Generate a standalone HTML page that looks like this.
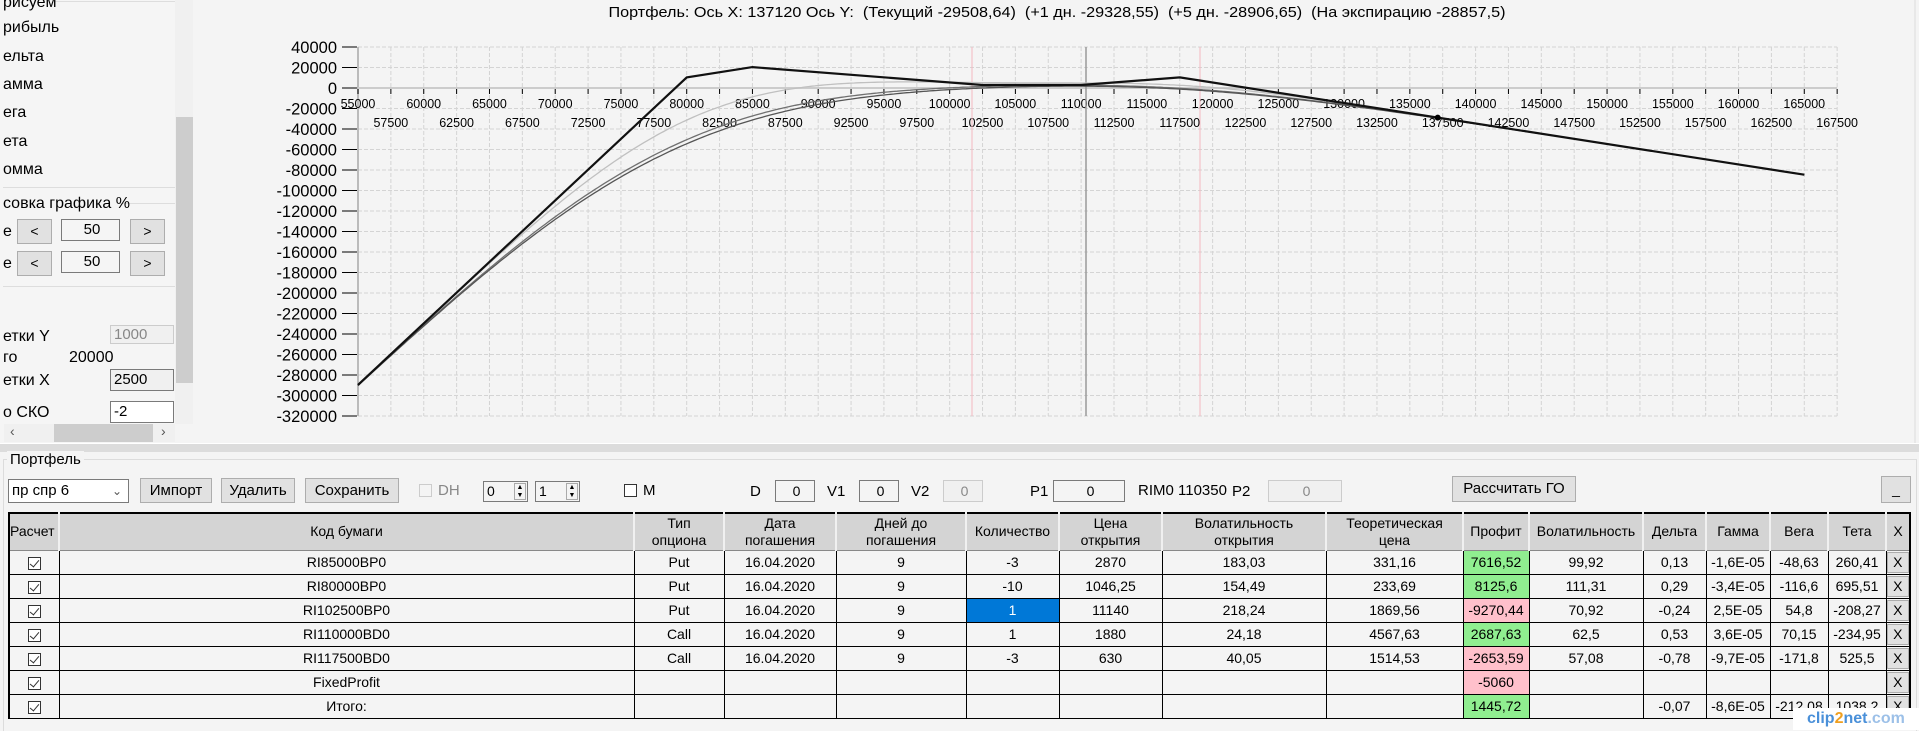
<!DOCTYPE html>
<html><head><meta charset="utf-8">
<style>
*{box-sizing:border-box;margin:0;padding:0}
body{width:1919px;height:730px;overflow:hidden;background:#f4f4f4;font-family:"Liberation Sans",Arial,sans-serif;font-size:14px;color:#000;position:relative}
.a{position:absolute;white-space:nowrap}
.l{font-size:16px}
.btn{position:absolute;background:#e1e1e1;border:1px solid #adadad;text-align:center;font-size:14px}
.inp{position:absolute;background:#fff;border:1px solid #7a7a7a;font-size:14px;padding-left:3px}
.dis{background:#f0f0f0;border-color:#ccc;color:#888}
table{position:absolute;left:8px;top:512px;border-collapse:collapse;table-layout:fixed;border:2px solid #000;border-bottom:none}
td{border:1px solid #000;height:24px;text-align:center;font-size:14px;overflow:hidden;white-space:nowrap;background:#f4f4f4}
th{background:#d4d4d4;font-weight:normal;height:37px;font-size:14px;line-height:17px;border-left:2px solid #f0f0f0;border-right:1px solid #a0a0a0;border-bottom:1px solid #888}
.g{background:#90ee90}.p{background:#ffc0cb}
.cb{display:inline-block;width:13px;height:13px;border:1px solid #333;background:#fff;position:relative;vertical-align:middle}
.cb:after{content:"";position:absolute;left:3px;top:0px;width:4px;height:8px;border:solid #333;border-width:0 1px 1px 0;transform:rotate(40deg)}
.xb{display:block;margin:0 auto;width:22px;height:21px;background:#e1e1e1;border:1px solid #adadad;line-height:19px}
</style></head><body>

<!-- left panel -->
<div class="a" style="left:0;top:0;width:175px;height:443px;background:#f5f5f5"></div>
<div class="a" style="left:55px;top:1px;width:120px;border-top:1px solid #ddd"></div>
<div class="a l" style="left:3px;top:-6px">рисуем</div>
<div class="a l" style="left:3px;top:19px">рибыль</div>
<div class="a l" style="left:3px;top:48px">ельта</div>
<div class="a l" style="left:3px;top:76px">амма</div>
<div class="a l" style="left:3px;top:104px">ега</div>
<div class="a l" style="left:3px;top:133px">ета</div>
<div class="a l" style="left:3px;top:161px">омма</div>
<div class="a" style="left:3px;top:187px;width:172px;border-top:1px solid #ddd"></div>
<div class="a" style="left:118px;top:203px;width:57px;border-top:1px solid #ddd"></div>
<div class="a l" style="left:3px;top:195px">совка графика %</div>
<div class="a l" style="left:3px;top:223px">е</div>
<div class="btn" style="left:17px;top:219px;width:35px;height:25px;line-height:23px">&lt;</div>
<div class="inp" style="left:61px;top:219px;width:59px;height:22px;text-align:center;background:#f5f5f5;line-height:20px;font-size:15px">50</div>
<div class="btn" style="left:130px;top:219px;width:35px;height:25px;line-height:23px">&gt;</div>
<div class="a l" style="left:3px;top:255px">е</div>
<div class="btn" style="left:17px;top:251px;width:35px;height:25px;line-height:23px">&lt;</div>
<div class="inp" style="left:61px;top:251px;width:59px;height:22px;text-align:center;background:#f5f5f5;line-height:20px;font-size:15px">50</div>
<div class="btn" style="left:130px;top:251px;width:35px;height:25px;line-height:23px">&gt;</div>
<div class="a" style="left:3px;top:286px;width:172px;border-top:1px solid #ddd"></div>
<div class="a l" style="left:3px;top:328px">етки Y</div>
<div class="inp dis" style="left:110px;top:325px;width:64px;height:19px;line-height:17px;font-size:15px">1000</div>
<div class="a l" style="left:3px;top:349px">го</div>
<div class="a l" style="left:69px;top:349px">20000</div>
<div class="a l" style="left:3px;top:372px">етки X</div>
<div class="inp" style="left:110px;top:369px;width:64px;height:22px;line-height:20px;background:#f0f0f0;font-size:15px">2500</div>
<div class="a l" style="left:3px;top:404px">о СКО</div>
<div class="inp" style="left:110px;top:401px;width:64px;height:22px;line-height:20px;font-size:15px">-2</div>
<div class="a" style="left:176px;top:403px;font-size:12px;color:#555">⌄</div>
<div class="a" style="left:175px;top:0;width:18px;height:424px;background:#f0f0f0"></div>
<div class="a" style="left:176px;top:117px;width:17px;height:266px;background:#cdcdcd"></div>
<div class="a" style="left:4px;top:424px;width:171px;height:18px;background:#f0f0f0"></div>
<div class="a" style="left:54px;top:424px;width:99px;height:18px;background:#cdcdcd"></div>
<div class="a" style="left:10px;top:423px;color:#555;font-size:14px">&lsaquo;</div>
<div class="a" style="left:161px;top:423px;color:#555;font-size:14px">&rsaquo;</div>

<!-- chart -->
<svg class="a" style="left:0;top:0" width="1919" height="445" id="ch">
<text x="1057" y="17" text-anchor="middle" font-size="15" textLength="897" lengthAdjust="spacingAndGlyphs" font-family="Liberation Sans" xml:space="preserve" style="white-space:pre">Портфель: Ось X: 137120 Ось Y:  (Текущий -29508,64)  (+1 дн. -29328,55)  (+5 дн. -28906,65)  (На экспирацию -28857,5)</text>
<g id="grid"></g>
<line x1="1915" y1="0" x2="1915" y2="444" stroke="#ddd"/>
</svg>

<!-- splitter -->
<div class="a" style="left:0;top:443px;width:1919px;height:9px;background:#dcdcdc;border-top:1px solid #fff"></div>
<div class="a" style="left:3px;top:459px;width:1914px;height:272px;border:1px solid #dcdcdc;border-bottom:none"></div>
<div class="a" style="left:7px;top:451px;background:#f4f4f4;padding:0 3px;font-size:15px">Портфель</div>

<!-- toolbar -->
<div class="inp" style="left:8px;top:479px;width:121px;height:24px;line-height:22px;font-size:15px">пр спр 6<span style="position:absolute;right:6px;top:0;color:#555;font-size:12px">&#8964;</span></div>
<div class="btn" style="left:140px;top:478px;width:72px;height:25px;line-height:23px;font-size:15px">Импорт</div>
<div class="btn" style="left:221px;top:478px;width:74px;height:25px;line-height:23px;font-size:15px">Удалить</div>
<div class="btn" style="left:305px;top:478px;width:94px;height:25px;line-height:23px;font-size:15px">Сохранить</div>
<div class="a" style="left:419px;top:484px;width:13px;height:13px;border:1px solid #ccc;background:#f4f4f4"></div>
<div class="a" style="left:438px;top:482px;color:#888;font-size:15px">DH</div>
<div class="inp" style="left:483px;top:481px;width:45px;height:21px;line-height:19px;background:#f4f4f4">0<span style="position:absolute;right:1px;top:1px;width:12px;height:17px;border:1px solid #aaa;font-size:7px;line-height:8px;text-align:center">▲<br>▼</span></div>
<div class="inp" style="left:535px;top:481px;width:45px;height:21px;line-height:19px;background:#f4f4f4">1<span style="position:absolute;right:1px;top:1px;width:12px;height:17px;border:1px solid #aaa;font-size:7px;line-height:8px;text-align:center">▲<br>▼</span></div>
<div class="a" style="left:624px;top:484px;width:13px;height:13px;border:1px solid #333;background:#fff"></div>
<div class="a" style="left:643px;top:482px;font-size:15px">M</div>
<div class="a" style="left:750px;top:483px;font-size:15px">D</div>
<div class="inp" style="left:775px;top:480px;width:40px;height:22px;text-align:center;line-height:20px;background:#f4f4f4">0</div>
<div class="a" style="left:827px;top:483px;font-size:15px">V1</div>
<div class="inp" style="left:859px;top:480px;width:40px;height:22px;text-align:center;line-height:20px;background:#f4f4f4">0</div>
<div class="a" style="left:911px;top:483px;font-size:15px">V2</div>
<div class="inp dis" style="left:943px;top:480px;width:40px;height:22px;text-align:center;line-height:20px">0</div>
<div class="a" style="left:1030px;top:483px;font-size:15px">P1</div>
<div class="inp" style="left:1053px;top:480px;width:72px;height:22px;text-align:center;line-height:20px;background:#f4f4f4">0</div>
<div class="a" style="left:1138px;top:482px;font-size:15px">RIM0 110350</div>
<div class="a" style="left:1232px;top:483px;font-size:15px">P2</div>
<div class="inp dis" style="left:1268px;top:480px;width:74px;height:22px;text-align:center;line-height:20px">0</div>
<div class="btn" style="left:1452px;top:476px;width:124px;height:26px;line-height:24px;font-size:15px">Рассчитать ГО</div>
<div class="btn" style="left:1881px;top:476px;width:30px;height:27px;line-height:24px">_</div>

<table>
<colgroup><col style="width:50px"><col style="width:575px"><col style="width:90px"><col style="width:112px"><col style="width:130px"><col style="width:93px"><col style="width:103px"><col style="width:164px"><col style="width:137px"><col style="width:66px"><col style="width:114px"><col style="width:63px"><col style="width:64px"><col style="width:58px"><col style="width:58px"><col style="width:24px"></colgroup>
<tr><th style="text-align:left;border-left:none">Расчет</th><th>Код бумаги</th><th>Тип<br>опциона</th><th>Дата<br>погашения</th><th>Дней до<br>погашения</th><th>Количество</th><th>Цена<br>открытия</th><th>Волатильность<br>открытия</th><th>Теоретическая<br>цена</th><th>Профит</th><th>Волатильность</th><th>Дельта</th><th>Гамма</th><th>Вега</th><th>Тета</th><th>X</th></tr>
<tr><td><span class="cb"></span></td><td>RI85000BP0</td><td>Put</td><td>16.04.2020</td><td>9</td><td>-3</td><td>2870</td><td>183,03</td><td>331,16</td><td class="g">7616,52</td><td>99,92</td><td>0,13</td><td>-1,6E-05</td><td>-48,63</td><td>260,41</td><td><span class="xb">X</span></td></tr>
<tr><td><span class="cb"></span></td><td>RI80000BP0</td><td>Put</td><td>16.04.2020</td><td>9</td><td>-10</td><td>1046,25</td><td>154,49</td><td>233,69</td><td class="g">8125,6</td><td>111,31</td><td>0,29</td><td>-3,4E-05</td><td>-116,6</td><td>695,51</td><td><span class="xb">X</span></td></tr>
<tr><td><span class="cb"></span></td><td>RI102500BP0</td><td>Put</td><td>16.04.2020</td><td>9</td><td style="background:#0078d7;color:#fff">1</td><td>11140</td><td>218,24</td><td>1869,56</td><td class="p">-9270,44</td><td>70,92</td><td>-0,24</td><td>2,5E-05</td><td>54,8</td><td>-208,27</td><td><span class="xb">X</span></td></tr>
<tr><td><span class="cb"></span></td><td>RI110000BD0</td><td>Call</td><td>16.04.2020</td><td>9</td><td>1</td><td>1880</td><td>24,18</td><td>4567,63</td><td class="g">2687,63</td><td>62,5</td><td>0,53</td><td>3,6E-05</td><td>70,15</td><td>-234,95</td><td><span class="xb">X</span></td></tr>
<tr><td><span class="cb"></span></td><td>RI117500BD0</td><td>Call</td><td>16.04.2020</td><td>9</td><td>-3</td><td>630</td><td>40,05</td><td>1514,53</td><td class="p">-2653,59</td><td>57,08</td><td>-0,78</td><td>-9,7E-05</td><td>-171,8</td><td>525,5</td><td><span class="xb">X</span></td></tr>
<tr><td><span class="cb"></span></td><td>FixedProfit</td><td></td><td></td><td></td><td></td><td></td><td></td><td></td><td class="p">-5060</td><td></td><td></td><td></td><td></td><td></td><td><span class="xb">X</span></td></tr>
<tr><td><span class="cb"></span></td><td>Итого:</td><td></td><td></td><td></td><td></td><td></td><td></td><td></td><td class="g">1445,72</td><td></td><td>-0,07</td><td>-8,6E-05</td><td>-212,08</td><td>1038,2</td><td><span class="xb">X</span></td></tr>
</table>
<div class="a" style="left:1793px;top:708px;width:126px;height:22px;background:#fff;color:#4a90d9;font-size:16px;font-weight:bold;padding-left:14px;line-height:22px;overflow:hidden">clip<span style="color:#f0a020">2</span>net<span style="color:#9cc0e8">.com</span></div>

<script>
(function(){
var NS="http://www.w3.org/2000/svg",g=document.getElementById("grid");
function el(t,a,txt){var e=document.createElementNS(NS,t);for(var k in a)e.setAttribute(k,a[k]);if(txt!=null)e.textContent=txt;g.appendChild(e);return e;}
function X(S){return 358+(S-55000)*32.87/2500;}
function Y(V){return 88-V*20.5/20000;}
var yt=Y(40000),yb=Y(-320000);
for(var S=55000;S<=167500;S+=2500)el("line",{x1:X(S),y1:yt,x2:X(S),y2:yb,stroke:"#d4d4d4","stroke-dasharray":"4,2"});
for(var V=40000;V>=-320000;V-=20000){el("line",{x1:X(55000),y1:Y(V),x2:X(167500),y2:Y(V),stroke:"#d4d4d4","stroke-dasharray":"4,2"});
 el("line",{x1:342,y1:Y(V),x2:357,y2:Y(V),stroke:"#000"});
 el("text",{x:337,y:Y(V)+6,"text-anchor":"end","font-size":"16.5","font-family":"Liberation Sans"},String(V));}
el("line",{x1:358,y1:yt,x2:358,y2:yb,stroke:"#bbb","stroke-width":2});
el("line",{x1:358,y1:88,x2:X(167500),y2:88,stroke:"#ccc","stroke-width":2});
for(var S=55000;S<=167500;S+=2500){el("line",{x1:X(S),y1:89,x2:X(S),y2:94,stroke:"#000"});
 var lab=(S%5000==0);el("text",{x:X(S),y:lab?108:127,"text-anchor":"middle","font-size":"12.5","font-family":"Liberation Sans"},String(S));}
el("line",{x1:972,y1:yt,x2:972,y2:yb,stroke:"#f4b8c0"});
el("line",{x1:1200,y1:yt,x2:1200,y2:yb,stroke:"#f4b8c0"});
el("line",{x1:1086,y1:yt,x2:1086,y2:yb,stroke:"#999","stroke-width":1.5});
function erf(x){var s=x<0?-1:1;x=Math.abs(x);var t=1/(1+0.3275911*x);var y=1-(((((1.061405429*t-1.453152027)*t)+1.421413741)*t-0.284496736)*t+0.254829592)*t*Math.exp(-x*x);return s*y;}
function N(x){return 0.5*(1+erf(x/Math.SQRT2));}
function bs(S,K,T,v,c){var sv=v*Math.sqrt(T);var d1=(Math.log(S/K)+0.5*sv*sv)/sv,d2=d1-sv;return c?S*N(d1)-K*N(d2):K*N(-d2)-S*N(-d1);}
var P=[[85000,0,-3,2870,.9992],[80000,0,-10,1046.25,1.1131],[102500,0,1,11140,.7092],[110000,1,1,1880,.625],[117500,1,-3,630,.5708]];
function pnl(S,T){var s=-5060;P.forEach(function(p){var v=T<=0?(p[1]?Math.max(S-p[0],0):Math.max(p[0]-S,0)):bs(S,p[0],T,p[4],p[1]);s+=p[2]*(v-p[3]);});return s;}
[[4,"#c0c0c0"],[8,"#707070"],[9,"#555"]].forEach(function(c){var d="";for(var S=55000;S<=165000;S+=250){d+=(S==55000?"M":"L")+X(S).toFixed(1)+","+Y(pnl(S,c[0]/365)).toFixed(1);}el("path",{d:d,fill:"none",stroke:c[1],"stroke-width":1.3});});
var d="";[55000,80000,85000,102500,110000,117500,165000].forEach(function(S,i){d+=(i?"L":"M")+X(S).toFixed(1)+","+Y(pnl(S,0)).toFixed(1);});
el("path",{d:d,fill:"none",stroke:"#111","stroke-width":2.2});
el("circle",{cx:X(137120),cy:Y(-28857.5),r:3,fill:"#000"});
})();
</script>
</body></html>
